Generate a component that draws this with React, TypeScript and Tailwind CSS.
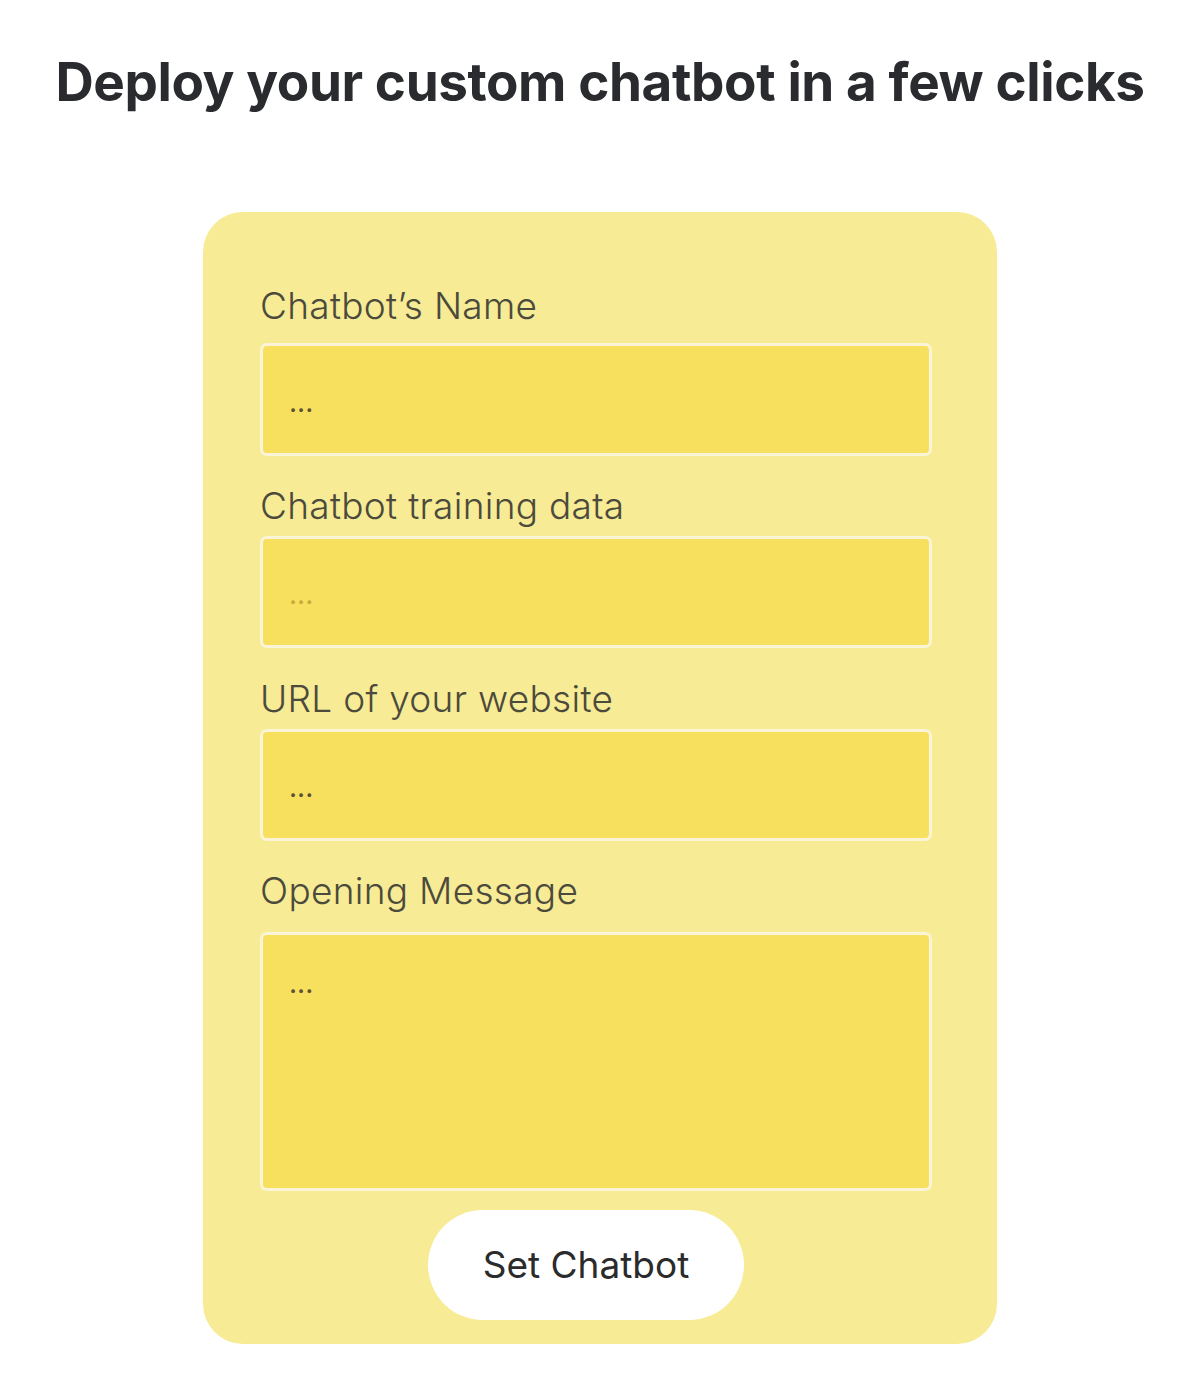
import { useState } from "react";

const fields = [
    { label: "Chatbot’s Name", gapTop: "mt-0", gapBelow: "mt-[15px]", h: "h-[113px]", faint: false },
    { label: "Chatbot training data", gapTop: "mt-[28px]", gapBelow: "mt-[8px]", h: "h-[112px]", faint: true },
    { label: "URL of your website", gapTop: "mt-[29px]", gapBelow: "mt-[8px]", h: "h-[112px]", faint: false },
];

export default function App() {
    const [values, setValues] = useState(["", "", "", ""]);

    const update = (i: number, v: string) => {
        const next = [...values];
        next[i] = v;
        setValues(next);
    };

    return (
        <div
            className="min-h-[1400px] bg-white flex flex-col items-center"
            style={{ fontFamily: "Inter, 'Liberation Sans', sans-serif" }}
        >
            <h1 className="mt-[50px] text-[53px] leading-[64px] font-bold tracking-[-0.4px] text-[#2a2b2e]">
                Deploy your custom chatbot in a few clicks
            </h1>

            <div className="mt-[98px] w-[794px] rounded-[40px] bg-[#f7eb95] pl-[57px] pt-[72px] pb-[24px]">
                {fields.map((f, i) => (
                    <div key={i} className={f.gapTop}>
                        <label className="block text-[37px] leading-[44px] font-light tracking-[0.3px] text-[#4b4a3c]">
                            {f.label}
                        </label>
                        <input
                            type="text"
                            value={values[i]}
                            onChange={(e) => update(i, e.target.value)}
                            placeholder="..."
                            className={`${f.gapBelow} ${f.h} block w-[672px] rounded-[7px] border-[3px] border-[#fbf4d6] bg-[#f6e05e] px-[26px] pt-[4px] text-[28px] outline-none ${
                                f.faint ? "placeholder:text-[#c9a93a]" : "placeholder:text-[#5a5234]"
                            }`}
                        />
                    </div>
                ))}

                <div className="mt-[28px]">
                    <label className="block text-[37px] leading-[44px] font-light tracking-[0.3px] text-[#4b4a3c]">
                        Opening Message
                    </label>
                    <textarea
                        value={values[3]}
                        onChange={(e) => update(3, e.target.value)}
                        placeholder="..."
                        className="mt-[19px] block h-[259px] w-[672px] resize-none rounded-[7px] border-[3px] border-[#fbf4d6] bg-[#f6e05e] px-[26px] pt-[34px] text-[28px] leading-[28px] outline-none placeholder:text-[#5a5234]"
                    />
                </div>

                <div className="mt-[19px] flex w-[672px] justify-center pr-[20px]">
                    <button
                        type="button"
                        className="h-[110px] w-[316px] rounded-full bg-white text-[37px] text-[#2b2b2b]"
                    >
                        Set Chatbot
                    </button>
                </div>
            </div>
        </div>
    );
}
